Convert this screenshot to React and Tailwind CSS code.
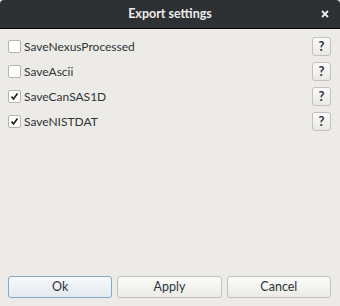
import React from 'react';

const options = [
    { name: 'SaveNexusProcessed', checked: false },
    { name: 'SaveAscii', checked: false },
    { name: 'SaveCanSAS1D', checked: true },
    { name: 'SaveNISTDAT', checked: true },
];

const CheckBox = ({ checked }) => (
    <span className="flex h-[13px] w-[13px] items-center justify-center rounded-[2px] border border-[#b6b3ae] bg-white">
        {checked && (
            <svg width="9" height="9" viewBox="0 0 9 9">
                <path d="M1.5 4.5 L3.5 7 L7.5 1.5" fill="none" stroke="#1a1a1a" strokeWidth="1.6" />
            </svg>
        )}
    </span>
);

const Button = ({ children, primary }) => (
    <button
        className={
            primary
                ? 'flex h-[22px] flex-1 items-center justify-center rounded-[3px] border border-[#86a8c8] bg-gradient-to-b from-[#f7f9fb] to-[#e3e9ef] text-[12.5px] text-[#2e3436]'
                : 'flex h-[22px] flex-1 items-center justify-center rounded-[3px] border border-[#c4c1bc] bg-gradient-to-b from-[#fbfbfa] to-[#ecebe8] text-[12.5px] text-[#2e3436]'
        }
    >
        {children}
    </button>
);

export default function App() {
    return (
        <div className="flex h-[306px] w-[340px] flex-col overflow-hidden bg-[#edebe8] font-['Lato',sans-serif]">
            <div className="relative flex h-[29px] items-center justify-center rounded-t-[4px] border-b border-black bg-[#2e3133]">
                <span className="text-[12.5px] font-bold text-[#eeeeec]">Export settings</span>
                <svg className="absolute right-[11px] top-[10px]" width="8" height="8" viewBox="0 0 8 8">
                    <path d="M1 1 L7 7 M7 1 L1 7" stroke="#eeeeec" strokeWidth="1.8" />
                </svg>
            </div>

            <div className="flex flex-1 flex-col pl-[8px] pr-[9px] pt-[5px]">
                {options.map(o => (
                    <div key={o.name} className="flex h-[25px] items-center">
                        <CheckBox checked={o.checked} />
                        <span className="ml-[3px] text-[12px] text-[#2e3436]">{o.name}</span>
                        <button className="ml-auto flex h-[19px] w-[19px] items-center justify-center rounded-[3px] border border-[#c4c1bc] bg-gradient-to-b from-[#fbfbfa] to-[#e9e8e5] text-[13px] font-bold text-[#2e3436]">
                            ?
                        </button>
                    </div>
                ))}
            </div>

            <div className="flex gap-[5px] pb-[8px] pl-[8px] pr-[9px]">
                <Button primary>Ok</Button>
                <Button>Apply</Button>
                <Button>Cancel</Button>
            </div>
        </div>
    );
}
